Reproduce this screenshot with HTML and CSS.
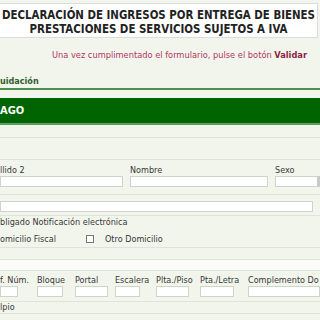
FILE: index.html
```html
<!DOCTYPE html>
<html lang="es">
<head>
    <meta charset="UTF-8">
    <title>Declaración de ingresos</title>
    <link rel="stylesheet" href="styles.css">
</head>
<body>
    <!-- Cabecera -->
    <div class="cabecera">
        <h1>DECLARACIÓN DE INGRESOS POR ENTREGA DE BIENES<br>PRESTACIONES DE SERVICIOS SUJETOS A IVA</h1>
    </div>
    <p class="aviso">Una vez cumplimentado el formulario, pulse el botón <strong>Validar</strong></p>

    <div class="seccion">uidación</div>
    <div class="barra">AGO</div>
    <div class="hueco"></div>
    <div class="hueco alto"></div>

    <!-- Datos personales -->
    <div class="fila campos">
        <div class="campo c-ape"><label>llido 2</label><input type="text"></div>
        <div class="campo c-nom"><label>Nombre</label><input type="text"></div>
        <div class="campo c-sexo"><label>Sexo</label><select></select></div>
    </div>
    <div class="fila unica"><input type="text" class="largo"></div>
    <div class="linea">bligado Notificación electrónica</div>
    <div class="fila domicilio">
        <span class="fiscal">omicilio Fiscal</span>
        <span class="check"></span>
        <span>Otro Domicilio</span>
    </div>
    <div class="hueco medio"></div>
    <div class="hueco blanco"></div>

    <!-- Dirección -->
    <div class="fila campos dir">
        <div class="campo d1"><label>f. Núm.</label><input type="text"></div>
        <div class="campo d2"><label>Bloque</label><input type="text"></div>
        <div class="campo d3"><label>Portal</label><input type="text"></div>
        <div class="campo d4"><label>Escalera</label><input type="text"></div>
        <div class="campo d5"><label>Plta./Piso</label><input type="text"></div>
        <div class="campo d6"><label>Pta./Letra</label><input type="text"></div>
        <div class="campo d7"><label>Complemento Do</label><input type="text"></div>
    </div>
    <div class="linea fina">lpio</div>
</body>
</html>
```

FILE: styles.css
```css
body { margin: 0; background: #f2f5ec; font-family: "DejaVu Sans Condensed", "DejaVu Sans", sans-serif; font-size: 9px; color: #383838; overflow: hidden; width: 320px; }
.cabecera { margin: 3px 2px 0 0; background: #fff; border: 1px solid #dcdcdc; border-left: 0; padding: 4px 0 1px; text-align: center; }
.cabecera h1 { margin: 0; font-size: 11.4px; line-height: 14px; color: #222; white-space: nowrap; }
.aviso { margin: 11px 13px 0 0; text-align: right; line-height: 12px; font-size: 9.2px; color: #b23562; }
.aviso strong { color: #8e1f45; }
.seccion { margin-top: 14px; line-height: 12px; padding-bottom: 1px; border-bottom: 2px solid #4f8f4f; font-weight: bold; color: #2f5f2f; }
.barra { margin-top: 8px; height: 25px; line-height: 25px; background: #006400; border-bottom: 2px solid #5c9e5c; color: #fff; font-weight: bold; font-size: 11px; }
.hueco { height: 12px; border-bottom: 1px solid #dfe4d9; }
.hueco.alto { height: 21px; }
.hueco.medio { height: 11px; }
.hueco.blanco { height: 10px; background: #fbfcf9; }
.fila { display: flex; border-bottom: 1px solid #dfe4d9; }
.campos { padding: 5px 0 7px; gap: 7px; }
.campo { display: flex; flex-direction: column; flex-shrink: 0; }
.campo label { line-height: 11px; white-space: nowrap; }
.campo input, .campo select { box-sizing: border-box; height: 11px; width: 100%; margin: 0; padding: 0; border: 1px solid #cfd3cb; background: #fff; }
.campo select { appearance: none; -webkit-appearance: none; border-right: 4px solid #c9c9c9; }
.c-ape { width: 123px; }
.c-nom { width: 138px; }
.c-sexo { width: 46px; }
.unica { padding: 6px 0 3px; }
.largo { box-sizing: border-box; width: 313px; height: 11px; margin: 0; border: 1px solid #cfd3cb; background: #fff; }
.linea { line-height: 12px; }
.domicilio { padding: 5px 0 2px; line-height: 12px; align-items: center; }
.fiscal { width: 86px; }
.check { width: 8px; height: 8px; box-sizing: border-box; border: 1px solid #777; background: #fff; margin-right: 11px; }
.dir { padding: 4px 0 4px; gap: 0; }
.d1 { width: 18px; margin-right: 19px; }
.d2 { width: 26px; margin-right: 12px; }
.d3 { width: 33px; margin-right: 7px; }
.d4 { width: 25px; margin-right: 16px; }
.d5 { width: 33px; margin-right: 11px; }
.d6 { width: 34px; margin-right: 14px; }
.d7 { width: 72px; }
.linea.fina { line-height: 11px; border-bottom: 1px solid #dfe4d9; }
```
